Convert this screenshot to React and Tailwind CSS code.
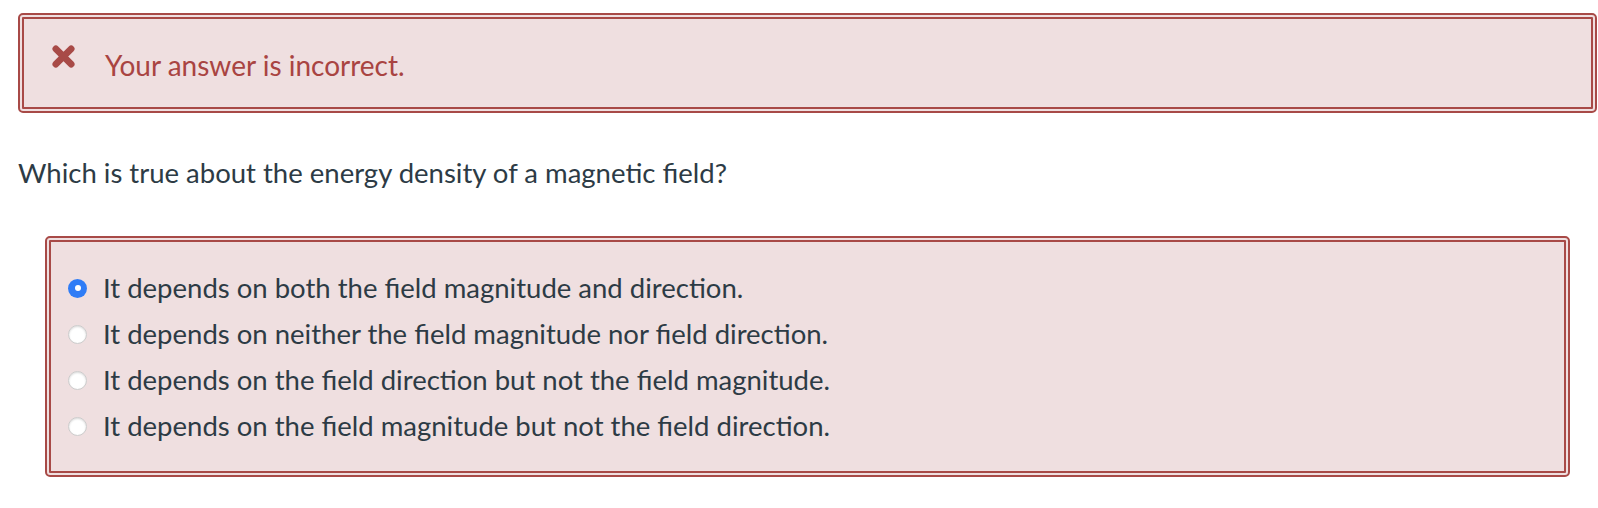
import React from 'react';

const answers = [
    'It depends on both the field magnitude and direction.',
    'It depends on neither the field magnitude nor field direction.',
    'It depends on the field direction but not the field magnitude.',
    'It depends on the field magnitude but not the field direction.',
];

const XIcon = () => (
    <svg width="23" height="23" viewBox="0 0 24 24" className="shrink-0 -mt-[14px]">
        <path d="M4 4 L20 20 M20 4 L4 20" stroke="#a84a47" strokeWidth="7" strokeLinecap="round" />
    </svg>
);

const Radio = ({ checked }) =>
    checked ? (
        <span className="flex items-center justify-center w-[19px] h-[19px] rounded-full bg-[#2f7cf6] shrink-0">
            <span className="w-[6px] h-[6px] rounded-full bg-white" />
        </span>
    ) : (
        <span className="w-[19px] h-[19px] rounded-full bg-white border border-[#cccccc] shadow-[inset_0_1px_2px_rgba(0,0,0,0.15)] shrink-0" />
    );

const App = () => {
    return (
        <div
            className="min-h-screen bg-white pl-[18px] pr-[1px] pt-[13px] text-[#2d3b45]"
            style={{ fontFamily: 'Lato, "Open Sans", sans-serif' }}
        >
            {/* feedback banner */}
            <div className="h-[100px] flex items-center gap-[30px] pl-[28px] rounded-[5px] border-[6px] border-double border-[#a84a47] bg-[#efdfe0]">
                <XIcon />
                <span className="text-[28px] leading-[34px] mt-[3px] text-[#a94442]">Your answer is incorrect.</span>
            </div>

            <p className="mt-[43px] text-[27.5px] leading-[34px]">
                Which is true about the energy density of a magnetic field?
            </p>

            <div className="mt-[46px] mx-[27px] rounded-[5px] border-[6px] border-double border-[#a84a47] bg-[#efdfe0] pt-[23px] pb-[22px] pl-[17px]">
                {answers.map((a, i) => (
                    <div key={i} className="h-[46px] flex items-center gap-[16px]">
                        <Radio checked={i === 0} />
                        <span className="text-[27.5px] leading-[34px]">{a}</span>
                    </div>
                ))}
            </div>
        </div>
    );
};

export default App;
